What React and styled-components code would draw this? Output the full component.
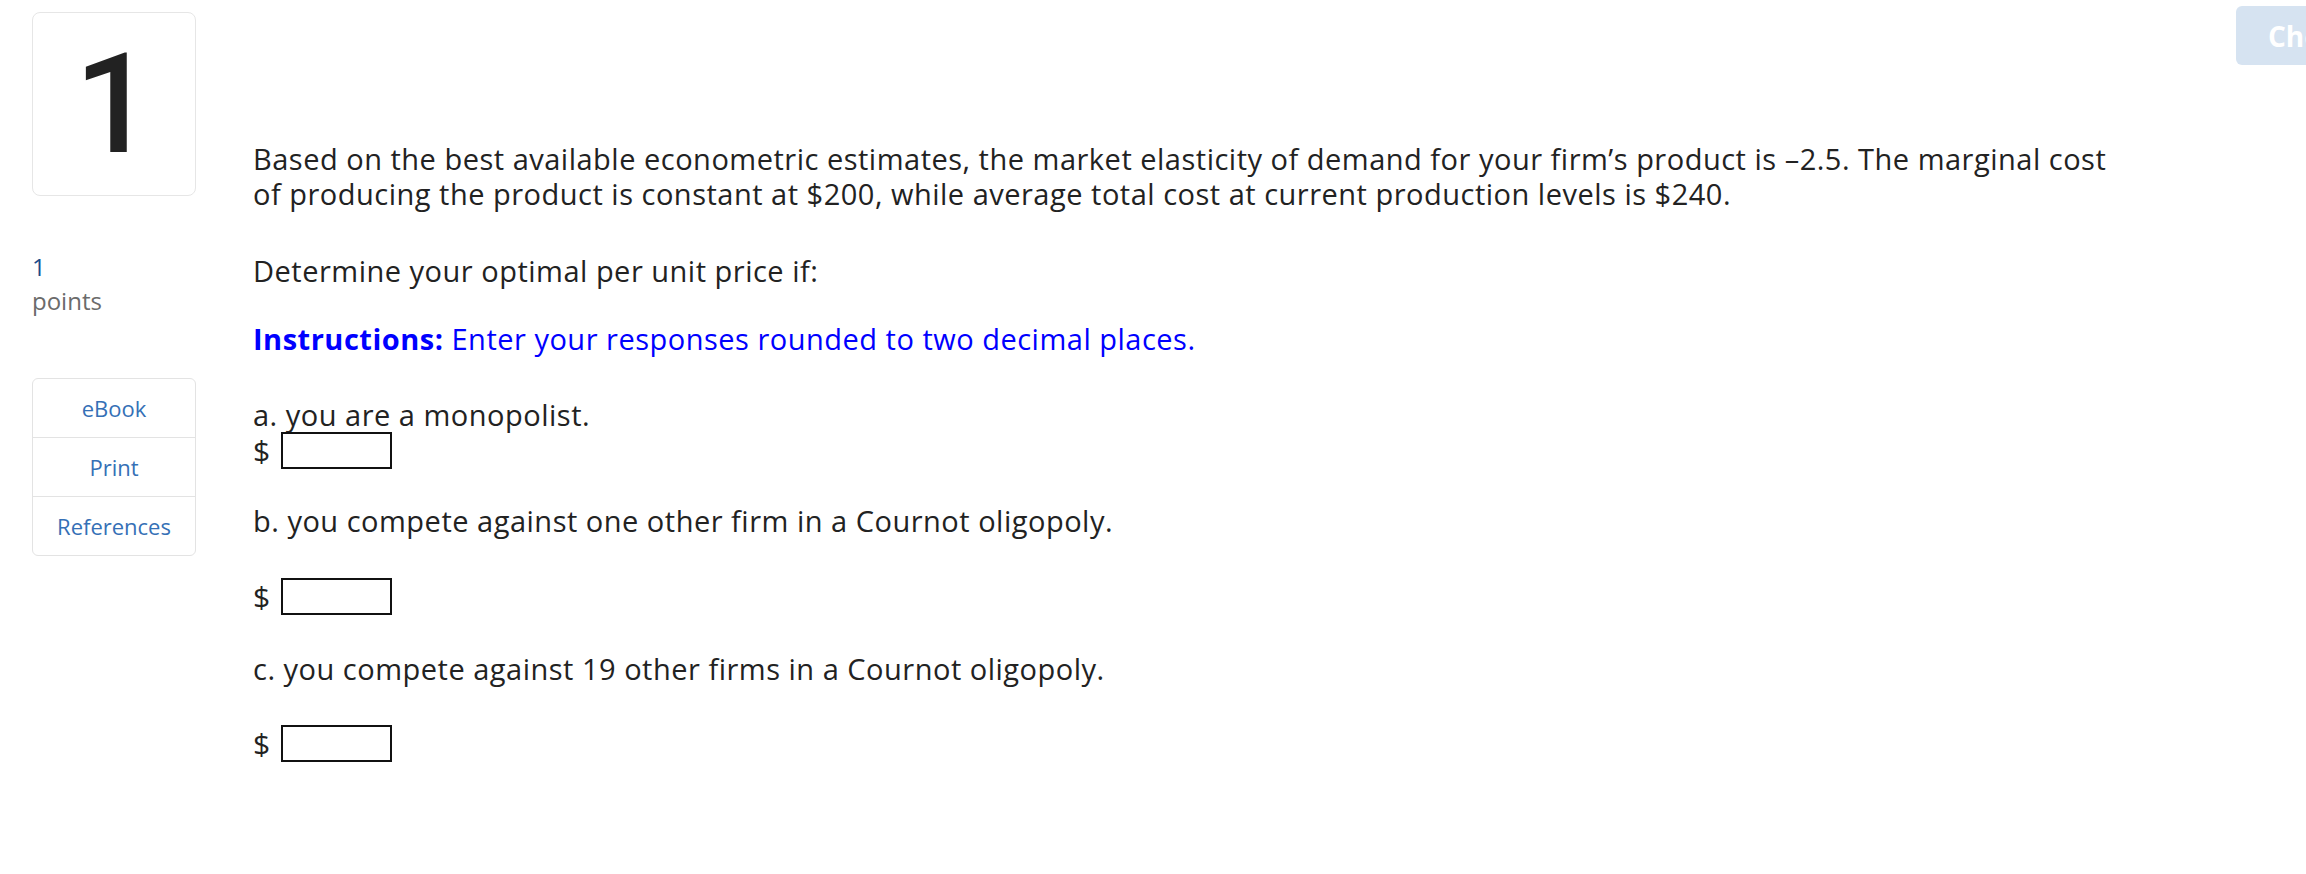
import React from "react";
import styled, { createGlobalStyle } from "styled-components";

const GlobalStyle = createGlobalStyle`
  html, body {
    margin: 0;
    padding: 0;
    background: #ffffff;
    overflow: hidden;
  }
  body {
    font-family: "Open Sans", "Liberation Sans", Arial, sans-serif;
    color: #222222;
  }
`;

const Page = styled.div`
  display: flex;
  align-items: flex-start;
  width: 100vw;
  height: 874px;
  overflow: hidden;
`;

const Sidebar = styled.div`
  flex: none;
  width: 164px;
  margin-left: 32px;
  padding-top: 12px;
  display: flex;
  flex-direction: column;
`;

const NumberCard = styled.div`
  height: 184px;
  box-sizing: border-box;
  border: 1px solid #e6e6e6;
  border-radius: 8px;
  display: flex;
  align-items: center;
  justify-content: center;
  font-family: Roboto, "Noto Sans", sans-serif;
  font-weight: 500;
  font-size: 140px;
  line-height: 1;
  color: #222222;
`;

const Points = styled.div`
  margin-top: 54px;
  font-size: 24px;
  line-height: 34px;
`;

const PointsValue = styled.div`
  color: #1b4c8c;
`;

const PointsLabel = styled.div`
  color: #6b6b6b;
`;

const LinkList = styled.div`
  margin-top: 60px;
  border: 1px solid #e3e3e3;
  border-radius: 6px;
  display: flex;
  flex-direction: column;
`;

const LinkRow = styled.div`
  height: 58px;
  display: flex;
  align-items: center;
  justify-content: center;
  font-size: 22px;
  color: #3570b6;
  cursor: pointer;
  & + & {
    border-top: 1px solid #e3e3e3;
  }
`;

const Main = styled.div`
  flex: none;
  width: 1866px;
  margin-left: 57px;
  padding-top: 141px;
  font-size: 29px;
  letter-spacing: 0.5px;
  line-height: 35px;
  color: #222222;
`;

const Para = styled.p`
  margin: ${(p) => p.$mt || 0}px 0 0;
`;

const Instructions = styled(Para)`
  color: #0000ff;
`;

const AnswerRow = styled.div`
  display: flex;
  align-items: center;
  gap: 10px;
  margin-top: ${(p) => p.$mt || 0}px;
`;

const Dollar = styled.span`
  font-size: 30px;
  line-height: 37px;
`;

const AnswerInput = styled.input`
  width: 111px;
  height: 37px;
  box-sizing: border-box;
  border: 2px solid #111111;
  border-radius: 0;
  background: #ffffff;
  padding: 0 6px;
  font: inherit;
  font-size: 22px;
  outline: none;
`;

const Aside = styled.div`
  flex: none;
  margin-left: 117px;
  padding-top: 6px;
`;

const CheckButton = styled.button`
  width: 240px;
  height: 59px;
  border: none;
  border-radius: 6px;
  background: #d6e3f1;
  color: #ffffff;
  font-family: "Open Sans", "Liberation Sans", sans-serif;
  font-weight: 700;
  font-size: 28px;
  text-align: left;
  white-space: nowrap;
  padding: 0 0 0 32px;
`;

const parts = [
  { label: "a. you are a monopolist.", labelGap: 41, inputGap: 0 },
  { label: "b. you compete against one other firm in a Cournot oligopoly.", labelGap: 34, inputGap: 40 },
  { label: "c. you compete against 19 other firms in a Cournot oligopoly.", labelGap: 36, inputGap: 39 },
];

export default function App() {
  return (
    <>
      <GlobalStyle />
      <Page>
        <Sidebar>
          <NumberCard>1</NumberCard>
          <Points>
            <PointsValue>1</PointsValue>
            <PointsLabel>points</PointsLabel>
          </Points>
          <LinkList>
            <LinkRow>eBook</LinkRow>
            <LinkRow>Print</LinkRow>
            <LinkRow>References</LinkRow>
          </LinkList>
        </Sidebar>

        <Main>
          <Para>
            Based on the best available econometric estimates, the market elasticity of demand for your
            firm’s product is –2.5. The marginal cost of producing the product is constant at $200, while
            average total cost at current production levels is $240.
          </Para>
          <Para $mt={42}>Determine your optimal per unit price if:</Para>
          <Instructions $mt={33}>
            <strong>Instructions:</strong> Enter your responses rounded to two decimal places.
          </Instructions>
          {parts.map((part) => (
            <React.Fragment key={part.label}>
              <Para $mt={part.labelGap}>{part.label}</Para>
              <AnswerRow $mt={part.inputGap}>
                <Dollar>$</Dollar>
                <AnswerInput type="text" />
              </AnswerRow>
            </React.Fragment>
          ))}
        </Main>

        <Aside>
          <CheckButton>Check my work</CheckButton>
        </Aside>
      </Page>
    </>
  );
}
